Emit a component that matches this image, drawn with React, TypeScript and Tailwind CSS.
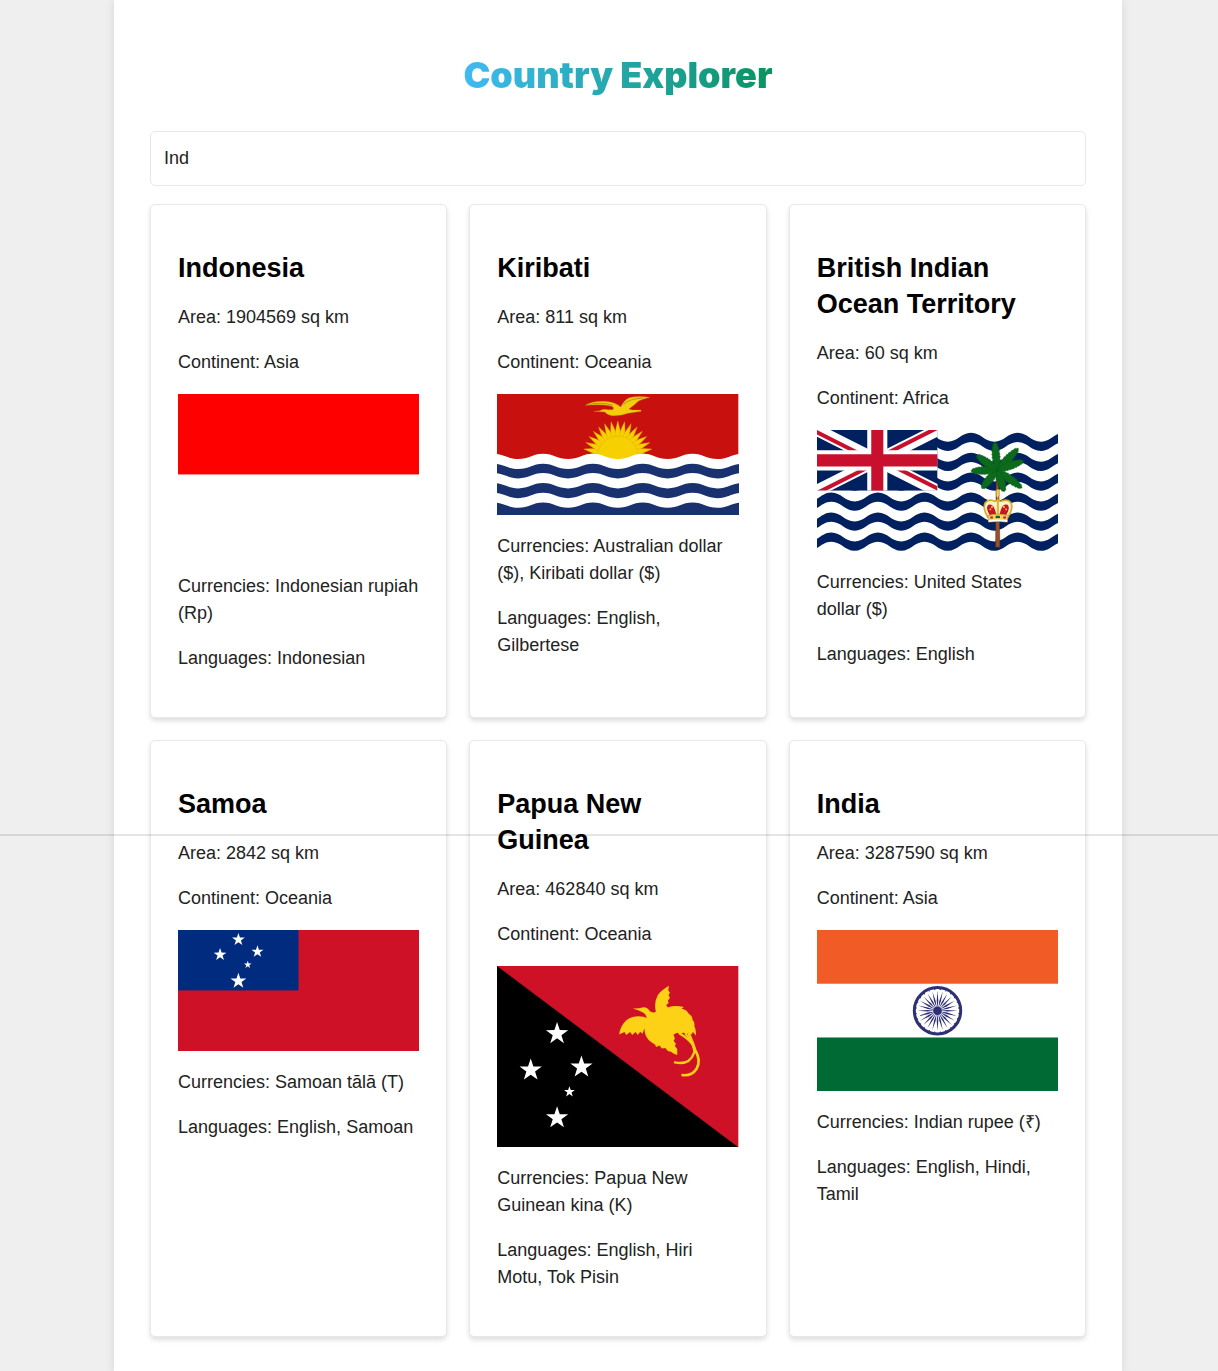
import React from "react";

/* Path of an evenly rolling horizontal band, starting on a crest. */
function waveBand(x0: number, half: number, count: number, top: number, amp: number, thick: number) {
  let d = `M${x0} ${top}`;
  for (let i = 0; i < count; i++) {
    const y1 = top + (i % 2 === 0 ? 0 : amp);
    const y2 = top + (i % 2 === 0 ? amp : 0);
    const x = x0 + i * half;
    d += `C${x + half * 0.42} ${y1} ${x + half * 0.58} ${y2} ${x + half} ${y2}`;
  }
  const endY = top + (count % 2 === 0 ? 0 : amp) + thick;
  d += `L${x0 + count * half} ${endY}`;
  for (let i = count; i > 0; i--) {
    const y1 = top + thick + (i % 2 === 0 ? 0 : amp);
    const y2 = top + thick + (i % 2 === 0 ? amp : 0);
    const x = x0 + i * half;
    d += `C${x - half * 0.42} ${y1} ${x - half * 0.58} ${y2} ${x - half} ${y2}`;
  }
  return d + "Z";
}

function starPoints(cx: number, cy: number, r: number) {
  return Array.from({ length: 10 }, (_, i) => {
    const a = (Math.PI / 5) * i - Math.PI / 2;
    const k = i % 2 === 0 ? r : r * 0.39;
    return `${cx + k * Math.cos(a)},${cy + k * Math.sin(a)}`;
  }).join(" ");
}

function Star({ x, y, r }: { x: number; y: number; r: number }) {
  return <polygon points={starPoints(x, y, r)} fill="#fff" />;
}

/* Serrated palm leaf running from the origin to (0, -len). */
function leafPath(len: number) {
  const steps = 8;
  let left = "";
  let right = "";
  for (let i = 1; i <= steps; i++) {
    const t = i / (steps + 1);
    const w = 13 * Math.pow(Math.sin(Math.PI * (t * 0.82 + 0.12)), 0.8);
    left += `L${-w} ${-len * t - 3}L${-w * 0.8} ${-len * t - 4}`;
    right = `L${w * 0.8} ${-len * t - 4}L${w} ${-len * t - 3}` + right;
  }
  return `M0 0${left}L0 ${-len}${right}Z`;
}

function IndonesiaFlag() {
  return (
    <svg viewBox="0 0 723 483" className="block w-full" role="img" aria-label="Flag of Indonesia">
      <rect width="723" height="483" fill="#fff" />
      <rect width="723" height="241" fill="#f00" />
    </svg>
  );
}

function KiribatiFlag() {
  const rays = Array.from({ length: 17 }, (_, i) => -90 + i * 11.25);
  return (
    <svg viewBox="37 43 723 362" className="block w-full" role="img" aria-label="Flag of Kiribati">
      <rect x="37" y="43" width="723" height="362" fill="#c8110f" />
      <g fill="#f7d000" stroke="#d9a80a" strokeWidth="1">
        {rays.map((a) => (
          <path key={a} d="M-9 -56Q-8 -76 0 -104Q8 -76 9 -56Z" transform={`translate(399 228) rotate(${a})`} />
        ))}
        <circle cx="399" cy="229" r="60" />
      </g>
      <path
        d="M327 95L345 93Q358 86 370 90L384 90Q390 83 378 79Q350 72 302 77Q322 64 358 65Q388 66 408 82Q417 61 433 54Q460 48 495 53Q474 58 461 64Q450 75 432 88L442 91L468 91L469 95L430 101Q407 110 381 108Q366 105 360 97Z"
        fill="#f3cd0c"
        stroke="#b98a10"
        strokeWidth="1"
      />
      <path d="M311 75Q350 66 384 77M416 74Q431 58 474 55" fill="none" stroke="#b8941a" strokeWidth="3" />
      <path d={waveBand(26, 74.6, 10, 222, 16, 200)} fill="#fff" />
      <path d={waveBand(26, 74.6, 10, 252, 16, 28)} fill="#19326f" />
      <path d={waveBand(26, 74.6, 10, 310, 16, 29)} fill="#19326f" />
      <path d={waveBand(26, 74.6, 10, 368, 16, 50)} fill="#19326f" />
    </svg>
  );
}

function UnionJack() {
  return (
    <g transform="translate(36 30) scale(6.02 6.07)">
      <clipPath id="canton">
        <path d="M0 0h60v30H0z" />
      </clipPath>
      <clipPath id="saltire">
        <path d="M30 15h30v15zv15H0zH0V0zV0h30z" />
      </clipPath>
      <g clipPath="url(#canton)">
        <path d="M0 0h60v30H0z" fill="#00205f" />
        <path d="M0 0l60 30m0-30L0 30" stroke="#fff" strokeWidth="6" />
        <path d="M0 0l60 30m0-30L0 30" clipPath="url(#saltire)" stroke="#c8102e" strokeWidth="4" />
        <path d="M30 0v30M0 15h60" stroke="#fff" strokeWidth="10" />
        <path d="M30 0v30M0 15h60" stroke="#c8102e" strokeWidth="6" />
      </g>
    </g>
  );
}

function OceanTerritoryFlag() {
  const leaves = [
    [-5, 84], [44, 91], [71, 83], [126, 92], [162, 68], [220, 72], [268, 79], [306, 76],
  ];
  return (
    <svg viewBox="36 30 723 362" className="block w-full" role="img" aria-label="Flag of the British Indian Ocean Territory">
      <rect x="36" y="30" width="723" height="363" fill="#fff" />
      {[38, 98, 157, 217, 277, 337].map((y) => (
        <path key={y} d={waveBand(-200, 69.75, 14, y, 27, 28)} fill="#00205f" />
      ))}
      <UnionJack />
      <path d="M573 160L580 160L584 381L571 381Z" fill="#97502a" stroke="#5b2c14" strokeWidth="1.5" />
      <g fill="#0b6a1c" stroke="#085a17" strokeWidth="1">
        {leaves.map(([a, len]) => (
          <path key={a} d={leafPath(len)} transform={`translate(576 150) rotate(${a})`} />
        ))}
      </g>
      <path d="M573 226V208H582V226L577 236Z" fill="#f2cf55" stroke="#9c7413" />
      <path
        d="M548 291Q531 265 540 248Q550 236 565 242Q574 246 578 239Q582 246 592 242Q608 236 617 248Q625 265 608 291Z"
        fill="#fff3c4"
        stroke="#d9a82c"
        strokeWidth="5"
      />
      <path d="M553 285Q540 264 549 254Q567 249 573 284ZM603 285Q616 264 607 254Q589 249 583 284Z" fill="#c91523" />
      <path d="M578 240V287" stroke="#e3b339" strokeWidth="6" />
      <path d="M560 258v6M596 258v6M553 268h5M600 268h5" stroke="#e8bd45" strokeWidth="5" />
      <path d="M548 286Q578 278 609 286L606 306Q578 301 550 306Z" fill="#f5d35e" stroke="#b68a27" strokeWidth="2" />
      <path d="M555 289h8v6h-8zM594 289h8v6h-8z" fill="#c91523" />
      <path d="M571 287h13v7h-13z" fill="#12603a" />
      <path d="M550 303Q578 299 606 303" fill="none" stroke="#fff" strokeWidth="5" />
    </svg>
  );
}

function SamoaFlag() {
  return (
    <svg viewBox="39 29 723 362" className="block w-full" role="img" aria-label="Flag of Samoa">
      <rect x="39" y="29" width="723" height="363" fill="#ce1126" />
      <rect x="39" y="29" width="361" height="181" fill="#002b7f" />
      <Star x={220} y={58} r={20} />
      <Star x={165} y={103} r={20} />
      <Star x={277} y={94} r={19} />
      <Star x={248} y={133} r={12} />
      <Star x={220} y={182} r={25} />
    </svg>
  );
}

function PapuaNewGuineaFlag() {
  return (
    <svg viewBox="38 32 723 542" className="block w-full" role="img" aria-label="Flag of Papua New Guinea">
      <rect x="38" y="32" width="723" height="543" fill="#ce1126" />
      <path d="M38 32L761 575H38Z" fill="#000" />
      <Star x={218} y={235} r={35} />
      <Star x={139} y={344} r={35} />
      <Star x={291} y={335} r={35} />
      <Star x={255} y={409} r={17} />
      <Star x={218} y={487} r={35} />
      <path
        d="M404 237Q407 213 424 196Q443 178 477 184L486 188Q485 176 475 171Q463 164 444 159Q463 160 473 156Q487 153 493 163Q497 171 508 171L514 169Q507 141 520 119Q528 106 553 91L551 105L556 112L552 119L556 128L550 135L552 143L545 149L550 156Q571 148 598 155L591 159Q608 164 612 174Q624 182 624 194Q632 202 629 211Q635 222 634 240L625 230L620 238L612 231L606 238L597 231L588 237L578 232L567 237L571 250L567 256L574 265L571 272L578 281L578 299L568 295L559 289L550 287L542 278L532 279L525 270L515 275L511 267Q488 256 482 236Q479 225 480 218L474 235L467 229L460 239L453 230L443 239L437 230L425 239L420 230Z"
        fill="#fcd116"
      />
      <g fill="none" stroke="#fcd116" strokeLinecap="round">
        <path d="M586 235Q635 263 628 293Q615 330 571 321" strokeWidth="7" />
        <path d="M613 235Q625 262 632 284Q650 315 636 340Q622 362 594 359" strokeWidth="8" />
        <path d="M603 236Q626 258 630 290" strokeWidth="6" />
      </g>
    </svg>
  );
}

function IndiaFlag() {
  const spokes = Array.from({ length: 24 }, (_, i) => i * 15);
  return (
    <svg viewBox="36 29 723 483" className="block w-full" role="img" aria-label="Flag of India">
      <rect x="36" y="29" width="723" height="484" fill="#fff" />
      <rect x="36" y="29" width="723" height="161" fill="#f15b25" />
      <rect x="36" y="351" width="723" height="162" fill="#006a35" />
      <g transform="translate(397 271)" fill="#2e3075">
        <circle r="69.5" fill="none" stroke="#2e3075" strokeWidth="9" />
        <circle r="13" />
        {spokes.map((a) => (
          <g key={a} transform={`rotate(${a})`}>
            <path d="M0 -8L-2.4 -30L0 -60L2.4 -30Z" />
            <circle cx="8.4" cy="-64" r="2" />
          </g>
        ))}
      </g>
    </svg>
  );
}

interface Country {
  name: string;
  area: number;
  continent: string;
  currencies: string;
  languages: string;
  Flag: () => React.JSX.Element;
}

const countries: Country[] = [
  { name: "Indonesia", area: 1904569, continent: "Asia", currencies: "Indonesian rupiah (Rp)", languages: "Indonesian", Flag: IndonesiaFlag },
  { name: "Kiribati", area: 811, continent: "Oceania", currencies: "Australian dollar ($), Kiribati dollar ($)", languages: "English, Gilbertese", Flag: KiribatiFlag },
  { name: "British Indian Ocean Territory", area: 60, continent: "Africa", currencies: "United States dollar ($)", languages: "English", Flag: OceanTerritoryFlag },
  { name: "Samoa", area: 2842, continent: "Oceania", currencies: "Samoan tālā (T)", languages: "English, Samoan", Flag: SamoaFlag },
  { name: "Papua New Guinea", area: 462840, continent: "Oceania", currencies: "Papua New Guinean kina (K)", languages: "English, Hiri Motu, Tok Pisin", Flag: PapuaNewGuineaFlag },
  { name: "India", area: 3287590, continent: "Asia", currencies: "Indian rupee (₹)", languages: "English, Hindi, Tamil", Flag: IndiaFlag },
];

function CountryCard({ name, area, continent, currencies, languages, Flag }: Country) {
  return (
    <article className="flex flex-col gap-[18px] rounded-[5px] border border-[#e8e8e8] bg-white px-[27px] py-[45px] shadow-[0_3px_5px_rgba(0,0,0,0.13)]">
      <h2 className="text-[27px] leading-[36px] font-bold text-black">{name}</h2>
      <p>{`Area: ${area} sq km`}</p>
      <p>{`Continent: ${continent}`}</p>
      <Flag />
      <p>{`Currencies: ${currencies}`}</p>
      <p>{`Languages: ${languages}`}</p>
    </article>
  );
}

export default function App() {
  return (
    <div className="relative min-h-screen bg-[#efefef] pl-[18px] font-['Liberation_Sans',Arial,sans-serif] text-[18px] leading-[27px] text-[#222]">
      <main className="mx-auto min-h-screen max-w-[1008px] bg-white px-9 pt-12 pb-9 shadow-[0_0_10px_rgba(0,0,0,0.1)]">
        <header className="mb-[29px] text-center">
          <h1 className="inline-block bg-linear-to-r from-[#3fbaf3] to-[#0b925f] bg-clip-text align-top font-['Inter',sans-serif] text-[36px] leading-[54px] font-black text-transparent">
            Country Explorer
          </h1>
        </header>
        <input
          type="text"
          aria-label="Search countries"
          defaultValue="Ind"
          className="mb-[18px] block w-full rounded-[5px] border border-[#e8e8e8] bg-white px-[13px] py-[13px] outline-none"
        />
        <section className="grid grid-cols-3 gap-[22px]">
          {countries.map((c) => (
            <CountryCard key={c.name} {...c} />
          ))}
        </section>
      </main>
      <div className="pointer-events-none absolute inset-x-0 top-[834px] h-0.5 bg-black/10" />
    </div>
  );
}
